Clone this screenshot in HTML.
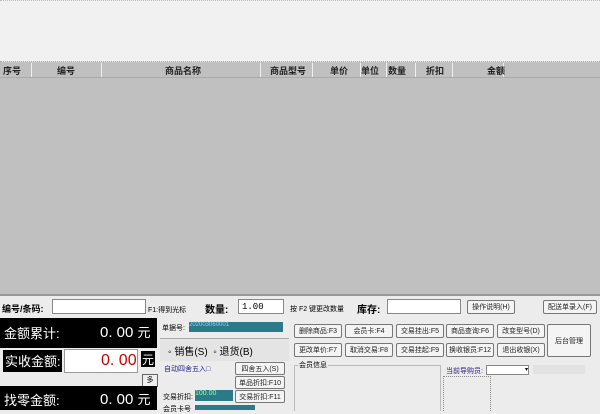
<html><head><style>
body{margin:0;width:600px;height:410px;overflow:hidden;background:#ececec;font-family:"Liberation Sans","Noto Sans CJK SC",sans-serif;font-size:8px;position:relative}
.a{position:absolute}
.btn{position:absolute;background:#f4f4f4;border:1px solid #777;border-radius:2px;font-size:7px;text-align:center;line-height:13px;color:#222;box-sizing:border-box}
.hd{position:absolute;top:64px;font-size:9px;font-weight:bold;color:#222}
.sep{position:absolute;top:63px;width:1px;height:14px;background:#eee}
.inp{position:absolute;background:#fff;border:1px solid #888;box-sizing:border-box}
.big{position:absolute;color:#fff;font-size:13px;line-height:15px;white-space:nowrap}
</style></head><body>
<div class="a" style="left:0;top:0;width:600px;height:62px;background:#f1f1f1;border-top:1px dotted #bbb;box-sizing:border-box"></div>
<div class="a" style="left:0;top:61px;width:600px;height:1px;border-top:1px dotted #aaa"></div>
<div class="a" style="left:0;top:62px;width:600px;height:232px;background:#c0c0c0"></div>
<div class="a" style="left:0;top:77px;width:600px;height:1px;background:#aaa"></div>
<div class="sep" style="left:31px"></div><div class="sep" style="left:101px"></div><div class="sep" style="left:260px"></div><div class="sep" style="left:312px"></div><div class="sep" style="left:360px"></div><div class="sep" style="left:386px"></div><div class="sep" style="left:415px"></div><div class="sep" style="left:452px"></div><div class="sep" style="left:503px"></div>
<div class="hd" style="left:3px">序号</div><div class="hd" style="left:57px">编号</div><div class="hd" style="left:165px">商品名称</div><div class="hd" style="left:270px">商品型号</div><div class="hd" style="left:330px">单价</div><div class="hd" style="left:361px">单位</div><div class="hd" style="left:388px">数量</div><div class="hd" style="left:426px">折扣</div><div class="hd" style="left:487px">金额</div>
<div class="a" style="left:0;top:294px;width:600px;height:2px;background:#999"></div>
<div class="a" style="left:2px;top:302px;font-size:9px;font-weight:bold">编号/条码:</div>
<div class="inp" style="left:52px;top:299px;width:94px;height:15px"></div>
<div class="a" style="left:148px;top:305px;font-size:7px">F1:得到光标</div>
<div class="a" style="left:205px;top:301px;font-size:10px;font-weight:bold">数量:</div>
<div class="inp" style="left:238px;top:299px;width:46px;height:15px;font-family:'Liberation Mono';font-size:9px;padding:2px 3px">1.00</div>
<div class="a" style="left:290px;top:304px;font-size:7px">按 F2 键更改数量</div>
<div class="a" style="left:357px;top:301px;font-size:10px;font-weight:bold">库存:</div>
<div class="inp" style="left:387px;top:299px;width:74px;height:15px"></div>
<div class="btn" style="left:467px;top:300px;width:48px;height:14px">操作说明(H)</div>
<div class="btn" style="left:543px;top:300px;width:54px;height:14px">配送单录入(F)</div>
<div class="a" style="left:0;top:318px;width:157px;height:30px;background:#000"></div>
<div class="big" style="left:4px;top:326px">金额累计:</div><div class="big" style="left:100px;top:325px;font-size:15px">0. 00 <span style="font-size:13px">元</span></div>
<div class="a" style="left:3px;top:350px;width:59px;height:22px;background:#000"></div>
<div class="big" style="left:5px;top:354px">实收金额:</div>
<div class="a" style="left:64px;top:349px;width:74px;height:24px;background:#fff;border:1px solid #999;box-sizing:border-box"></div>
<div class="a" style="left:101px;top:352px;color:#c00;font-size:16px">0. 00</div>
<div class="a" style="left:141px;top:351px;width:14px;height:16px;background:#000;color:#fff;font-size:12px;text-align:center">元</div>
<div class="a" style="left:142px;top:374px;width:14px;height:11px;background:#eee;border:1px solid #666;font-size:7px;text-align:center">多</div>
<div class="a" style="left:0;top:386px;width:157px;height:24px;background:#000"></div>
<div class="big" style="left:4px;top:393px">找零金额:</div><div class="big" style="left:100px;top:392px;font-size:15px">0. 00 <span style="font-size:13px">元</span></div>
<div class="a" style="left:162px;top:323px;font-size:7px">单据号:</div>
<div class="a" style="left:189px;top:322px;width:94px;height:10px;background:#2a7a8a;color:#9cf;font-size:6px">202003060001</div>
<div class="a" style="left:160px;top:338px;width:129px;height:22px;background:#e4e4e4;border-top:1px solid #aaa"></div>
<div class="a" style="left:168px;top:343px;font-size:10px">◦ 销售(S) &nbsp;◦ 退货(B)</div>
<div class="a" style="left:164px;top:364px;font-size:7px;color:#228">自动四舍五入□</div>
<div class="btn" style="left:235px;top:362px;width:50px;height:13px">四舍五入(S)</div>
<div class="btn" style="left:235px;top:376px;width:50px;height:13px">单品折扣:F10</div>
<div class="btn" style="left:235px;top:390px;width:50px;height:13px">交易折扣:F11</div>
<div class="a" style="left:163px;top:392px;font-size:7px">交易折扣:</div>
<div class="a" style="left:195px;top:390px;width:38px;height:11px;background:#2a7a8a;color:#9f9;font-size:7px">100.00</div>
<div class="a" style="left:163px;top:404px;font-size:7px">会员卡号</div>
<div class="a" style="left:195px;top:405px;width:60px;height:5px;background:#2a7a8a"></div>
<div class="btn" style="left:294px;top:324px;width:48px;height:14px">删除商品:F3</div>
<div class="btn" style="left:345px;top:324px;width:48px;height:14px">会员卡:F4</div>
<div class="btn" style="left:396px;top:324px;width:48px;height:14px">交易挂出:F5</div>
<div class="btn" style="left:446px;top:324px;width:48px;height:14px">商品查询:F6</div>
<div class="btn" style="left:497px;top:324px;width:48px;height:14px">改变型号(D)</div>
<div class="btn" style="left:294px;top:343px;width:48px;height:14px">更改单价:F7</div>
<div class="btn" style="left:345px;top:343px;width:48px;height:14px">取消交易:F8</div>
<div class="btn" style="left:396px;top:343px;width:48px;height:14px">交易挂起:F9</div>
<div class="btn" style="left:446px;top:343px;width:48px;height:14px">换收银员:F12</div>
<div class="btn" style="left:497px;top:343px;width:48px;height:14px">退出收银(X)</div>
<div class="btn" style="left:547px;top:324px;width:44px;height:33px;line-height:33px">后台管理</div>
<div class="a" style="left:294px;top:365px;width:145px;height:45px;border:1px solid #bbb;border-bottom:none"></div>
<div class="a" style="left:298px;top:360px;font-size:7px;background:#ececec;padding:0 1px">会员信息</div>
<div class="a" style="left:446px;top:366px;font-size:7px;color:#228">当前导购员:</div>
<div class="inp" style="left:486px;top:365px;width:43px;height:10px;font-size:6px;text-align:right">▾</div>
<div class="a" style="left:533px;top:365px;width:52px;height:9px;background:#e2e2e2"></div>
<div class="a" style="left:443px;top:376px;width:46px;height:34px;border:1px dotted #888;border-bottom:none"></div>
</body></html>
